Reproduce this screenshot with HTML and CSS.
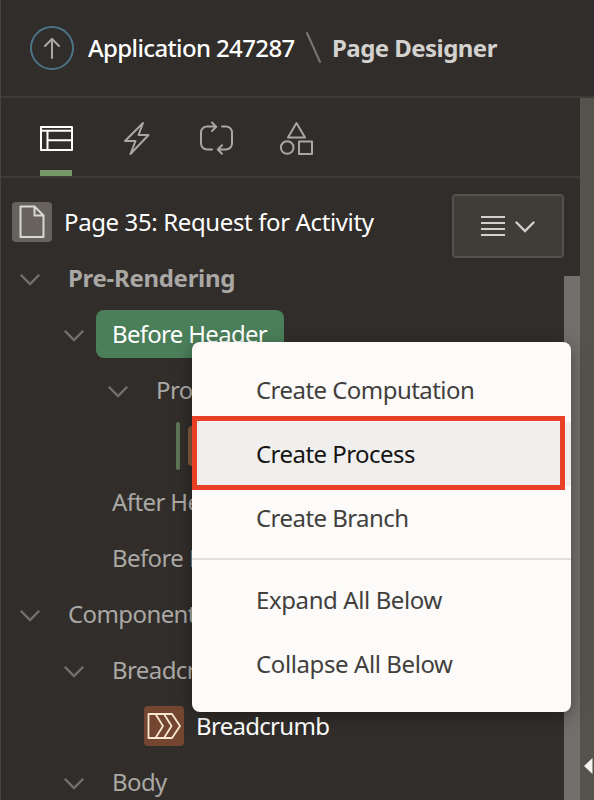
FILE: index.html
```html
<!DOCTYPE html>
<html lang="en">
<head>
<meta charset="utf-8">
<title>Page Designer</title>
<link rel="stylesheet" href="styles.css">
</head>
<body>
<svg width="0" height="0" class="defs">
  <symbol id="chev" viewBox="0 0 20 12"><path d="M1.500 1.500l8.500 8.500 8.500-8.500" fill="none" stroke="currentColor" stroke-width="2.4" stroke-linecap="round"/></symbol>
</svg>
<div class="app">
  <header class="header">
    <span class="up"><svg width="18" height="22" viewBox="0 0 18 22"><path d="M9 21V2M2 9l7-7 7 7" fill="none" stroke="#aaa8a5" stroke-width="2" stroke-linecap="round"/></svg></span>
    <span class="crumb">Application 247287</span>
    <svg class="slash" width="16" height="32" viewBox="0 0 16 32"><path d="M1 1l13 29" stroke="#797671" stroke-width="2" stroke-linecap="round"/></svg>
    <span class="current">Page Designer</span>
  </header>
  <div class="main">
    <div class="panel">
      <nav class="tabs">
        <span class="tab active"><svg width="34" height="34" viewBox="0 0 34 34"><path d="M1 6h31v23H1zM1 9.800h31M7.500 10v19M7.500 19.300H32" fill="none" stroke="#fff" stroke-width="2" stroke-linejoin="round"/></svg></span>
        <span class="tab"><svg width="34" height="34" viewBox="0 0 34 34"><path d="M23 2L5 20h10.500L10.500 33l18-19H18.500z" fill="none" stroke="#a9a7a3" stroke-width="2" stroke-linejoin="round"/></svg></span>
        <span class="tab"><svg width="34" height="34" viewBox="0 0 34 34"><path d="M12 28.500H7a6 6 0 0 1-6-6V11.500a6 6 0 0 1 6-6h8M12 1.500l4.200 4.200L12 10M22 5.500h4a6 6 0 0 1 6 6v11a6 6 0 0 1-6 6h-8M22 24.200L17.800 28.500l4.200 4.300" fill="none" stroke="#a9a7a3" stroke-width="2" stroke-linecap="round" stroke-linejoin="round"/></svg></span>
        <span class="tab"><svg width="34" height="34" viewBox="0 0 34 34"><path d="M16.500 2L25 16.500H8zM19 20.500h13V33H19z" fill="none" stroke="#a9a7a3" stroke-width="2" stroke-linejoin="round"/><circle cx="7.200" cy="26.500" r="6.300" fill="none" stroke="#a9a7a3" stroke-width="2"/></svg></span>
      </nav>
      <div class="page-row">
        <span class="page-icon"><svg width="26" height="34" viewBox="0 0 26 34"><path d="M3 1.500h12.500L24.500 10.500V32H1.500V1.500zM15.500 1.500v9H24" fill="none" stroke="#d9d7d4" stroke-width="2" stroke-linejoin="round"/></svg></span>
        <span class="page-name">Page 35: Request for Activity</span>
        <span class="menu-btn">
          <svg width="26" height="22" viewBox="0 0 26 22"><path d="M1 2h24M1 8h24M1 14h24M1 20h24" stroke="#d2d0cd" stroke-width="2"/></svg>
          <svg class="chev-light"><use href="#chev"/></svg>
        </span>
      </div>
      <div class="tree">
        <div class="row l1 bold"><svg class="chev"><use href="#chev"/></svg><span class="label">Pre-Rendering</span></div>
        <div class="row l2"><svg class="chev"><use href="#chev"/></svg><span class="label selected">Before Header</span></div>
        <div class="row l3"><svg class="chev"><use href="#chev"/></svg><span class="label">Process</span></div>
        <div class="row proc"><span class="bar"></span><span class="tile brown"></span></div>
        <div class="row l2 leaf"><span class="label">After Header</span></div>
        <div class="row l2 leaf"><span class="label">Before Header</span></div>
        <div class="row l1"><svg class="chev"><use href="#chev"/></svg><span class="label">Components</span></div>
        <div class="row l2"><svg class="chev"><use href="#chev"/></svg><span class="label">Breadcrumb</span></div>
        <div class="row item"><span class="tile rust"><svg width="34" height="26" viewBox="0 0 34 26"><path d="M1.500 1h23.500l8 12-8 12H1.500zM8.500 1l7.500 12-7.500 12M17 1l7.500 12L17 25" fill="none" stroke="#f8e8d0" stroke-width="1.800" stroke-linejoin="round"/></svg></span><span class="label white">Breadcrumb</span></div>
        <div class="row l2"><svg class="chev"><use href="#chev"/></svg><span class="label">Body</span></div>
      </div>
    </div>
    <div class="splitter"><svg width="9" height="16" viewBox="0 0 9 16"><path d="M8.500 0v16L0 8z" fill="#f5f3f1"/></svg></div>
  </div>
  <div class="scrollbar"></div>
  <div class="menu">
    <div class="mi">Create Computation</div>
    <div class="mi hover">Create Process</div>
    <div class="mi">Create Branch</div>
    <div class="sep"></div>
    <div class="mi wide">Expand All Below</div>
    <div class="mi wide">Collapse All Below</div>
    <div class="highlight"></div>
  </div>
</div>
</body>
</html>
```
FILE: styles.css
```css
* { box-sizing: border-box; }
body { margin: 0; background: #312d2a; font: 24px/32px "Noto Sans", sans-serif; letter-spacing: -.6px; color: #fff; white-space: nowrap; }
svg { display: block; flex: none; }
.defs { position: absolute; }
.app { position: relative; width: 594px; height: 800px; overflow: hidden; display: flex; flex-direction: column; border-left: 1px solid #474440; }
.header { height: 98px; flex: none; display: flex; align-items: center; padding-left: 29px; border-bottom: 2px solid #3e3b36; }
.up { width: 44px; height: 44px; border: 2px solid #4b7486; border-radius: 50%; display: flex; align-items: center; justify-content: center; margin-right: 14px; }
.crumb { width: 218px; font-weight: 500; letter-spacing: -.63px; }
.slash { margin-right: 10px; }
.current { font-weight: 700; color: #d4d2cf; letter-spacing: -.55px; }
.main { display: flex; flex: 1; min-height: 0; }
.panel { flex: 1; min-width: 0; }
.tabs { height: 80px; display: flex; gap: 48px; padding: 23px 0 0 39px; border-bottom: 2px solid #3e3b36; }
.tab { width: 32px; height: 55px; }
.tab svg { overflow: visible; }
.active { border-bottom: 6px solid #759769; }
.page-row { height: 72px; display: flex; align-items: flex-start; padding: 24px 16px 0 11px; }
.page-icon { width: 40px; height: 40px; border-radius: 4px; background: #67625e; display: flex; align-items: center; justify-content: center; margin-right: 12px; }
.page-name { margin-top: 4px; flex: 1; letter-spacing: -.38px; }
.menu-btn { width: 112px; height: 64px; margin-top: -8px; border: 2px solid #55514c; border-radius: 4px; background: #403c38; display: flex; align-items: center; justify-content: center; gap: 9px; padding-right: 1px; }
.chev-light, .chev { width: 20px; height: 12px; }
.chev-light { color: #d2d0cd; margin-top: 2px; }
.row { height: 56px; display: flex; align-items: center; color: #aaa8a5; }
.chev { color: #74716d; margin-right: 28px; margin-top: 3px; }
.l1 { padding-left: 19px; }
.l2 { padding-left: 63px; }
.l2 .chev { margin-right: 12px; }
.l2 .label { padding: 8px 16px; height: 48px; }
.l3 { padding-left: 107px; }
.row.leaf { padding-left: 95px; }
.bold { font-weight: 700; letter-spacing: -.3px; }
.row .selected { background: #4b7f5a; color: #fff; border-radius: 8px; width: 188px; letter-spacing: -.7px; }
.proc { padding-left: 175px; gap: 8px; }
.bar { width: 4px; height: 48px; border-radius: 2px; background: #5d7355; }
.tile { width: 40px; height: 40px; border-radius: 4px; display: flex; align-items: center; justify-content: center; }
.brown { background: #815b3d; }
.rust { background: #74462f; }
.item { padding-left: 143px; gap: 12px; letter-spacing: -.7px; }
.white { color: #fff; }
.splitter { width: 14px; background: #55514b; display: flex; align-items: flex-end; padding: 0 0 26px 4px; }
.scrollbar { position: absolute; left: 563px; top: 276px; width: 16px; height: 524px; background: #716e6b; }
.menu { position: absolute; left: 191px; top: 342px; width: 379px; height: 370px; padding: 16px 0; background: #fcfbfa; border-radius: 8px; color: #423f3d; box-shadow: 0 4px 16px rgba(0,0,0,.35); }
.mi { height: 64px; line-height: 64px; padding-left: 64px; letter-spacing: -.55px; }
.wide { letter-spacing: -.4px; }
.hover { background: #f0efee; color: #161513; }
.sep { height: 2px; background: #e2e1df; margin: 8px 0; }
.highlight { position: absolute; left: 0; top: 74px; width: 373px; height: 74px; border: 5px solid #ea4026; }
```
